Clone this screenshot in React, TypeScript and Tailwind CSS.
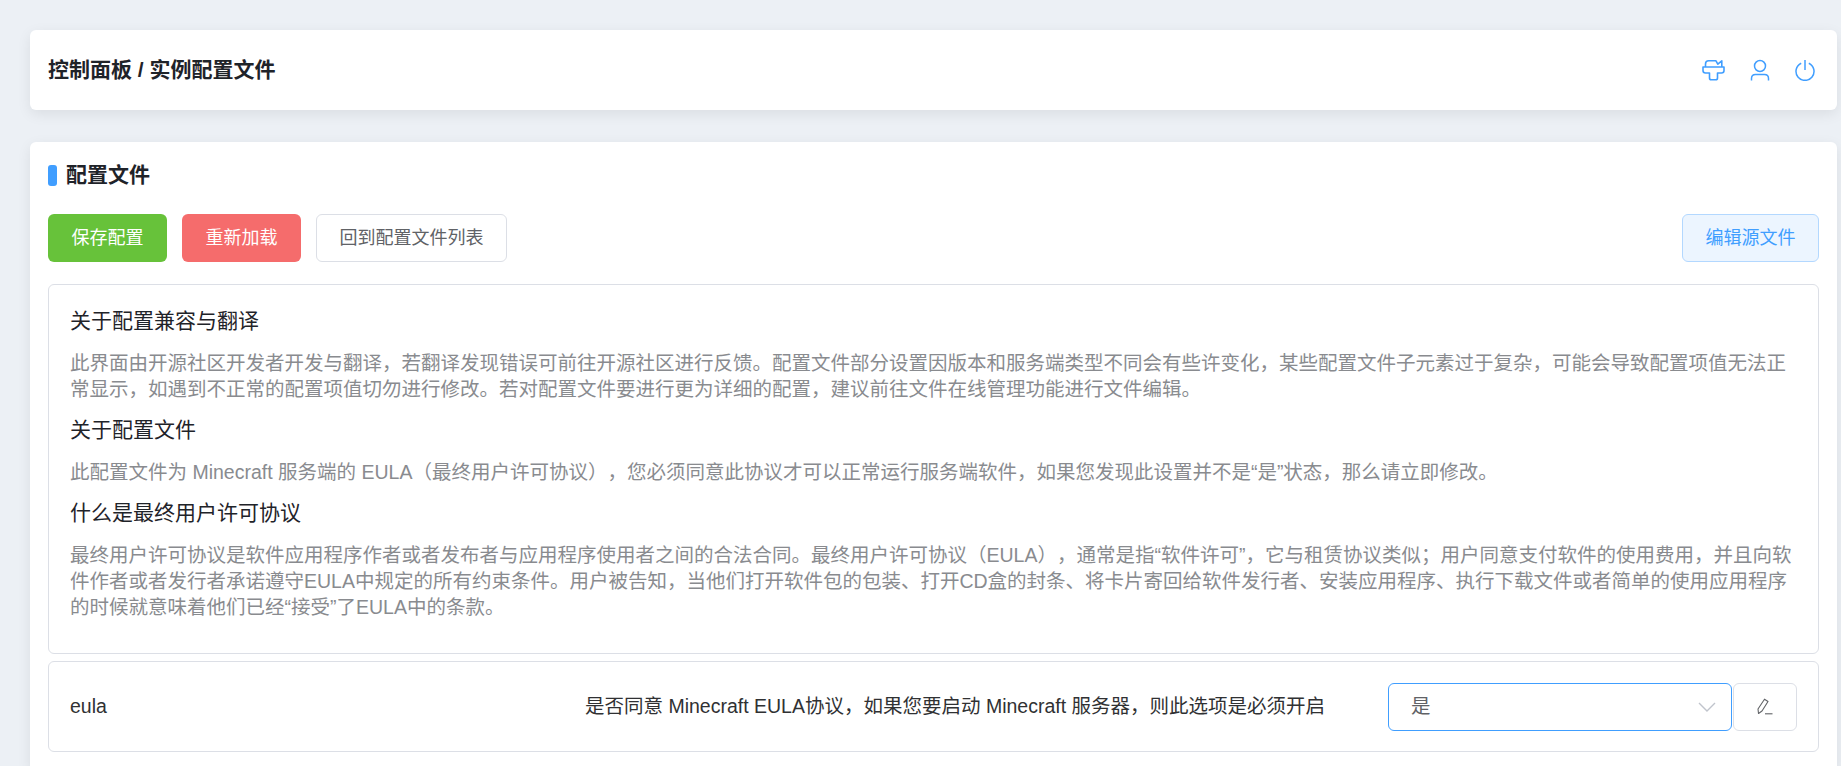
const font = { sans: "font-['Liberation_Sans','Noto_Sans_CJK_SC',sans-serif]" };

const notes = [
  {
    title: "关于配置兼容与翻译",
    body: "此界面由开源社区开发者开发与翻译，若翻译发现错误可前往开源社区进行反馈。配置文件部分设置因版本和服务端类型不同会有些许变化，某些配置文件子元素过于复杂，可能会导致配置项值无法正常显示，如遇到不正常的配置项值切勿进行修改。若对配置文件要进行更为详细的配置，建议前往文件在线管理功能进行文件编辑。",
  },
  {
    title: "关于配置文件",
    body: "此配置文件为 Minecraft 服务端的 EULA（最终用户许可协议），您必须同意此协议才可以正常运行服务端软件，如果您发现此设置并不是“是”状态，那么请立即修改。",
  },
  {
    title: "什么是最终用户许可协议",
    body: "最终用户许可协议是软件应用程序作者或者发布者与应用程序使用者之间的合法合同。最终用户许可协议（EULA），通常是指“软件许可”，它与租赁协议类似；用户同意支付软件的使用费用，并且向软件作者或者发行者承诺遵守EULA中规定的所有约束条件。用户被告知，当他们打开软件包的包装、打开CD盒的封条、将卡片寄回给软件发行者、安装应用程序、执行下载文件或者简单的使用应用程序的时候就意味着他们已经“接受”了EULA中的条款。",
  },
];

function BrushIcon() {
  return (
    <svg width="23" height="22" viewBox="0 0 23 22" fill="none" stroke="#409eff" strokeWidth="1.6" strokeLinejoin="round">
      <path d="M3.500 8V5q0-3.200 3.200-3.200h7.300l1.800 3.400 4-3.400V8" />
      <path d="M1 8h21v3.500q0 2.500-2.500 2.500H15.500v5q0 1.800-1.800 1.800H9.300q-1.800 0-1.800-1.800v-5H3.500Q1 14 1 11.500z" />
    </svg>
  );
}

function UserIcon() {
  return (
    <svg width="20" height="22" viewBox="0 0 20 22" fill="none" stroke="#409eff" strokeWidth="1.5">
      <circle cx="10" cy="7" r="5.500" />
      <path d="M1.500 21.500v-2q0-4 4-4h9q4 0 4 4v2" />
    </svg>
  );
}

function PowerIcon() {
  return (
    <svg width="20" height="22" viewBox="0 0 20 22" fill="none" stroke="#409eff" strokeWidth="1.5">
      <path d="M10 1v10" />
      <path d="M6.200 4.200a9 9 0 1 0 7.600 0" />
    </svg>
  );
}

function ArrowIcon() {
  return (
    <svg width="18" height="10" viewBox="0 0 18 10" fill="none" stroke="#c0c4cc" strokeWidth="1.4">
      <path d="M1 1l8 8 8-8" />
    </svg>
  );
}

function PenIcon() {
  return (
    <svg width="16" height="17" viewBox="0 0 16 17" fill="none" stroke="#606266" strokeWidth="1.1" strokeLinejoin="round">
      <path d="M1.500 15.500 1 11 7.500 1.200l3.500 2.300-6 9.500z" />
      <path d="M8 15.800h7.500" />
    </svg>
  );
}

export default function App() {
  return (
    <div className={`${font.sans} h-[766px] overflow-hidden bg-[#ecf0f5] pl-[30px] pr-[4px] pt-[30px] text-[#1f2329] [text-spacing-trim:space-all]`}>
      {/* top bar */}
      <div className="flex h-[80px] items-center justify-between rounded-md bg-white pl-[18px] pr-[22px] shadow-[0_4px_14px_rgba(0,0,0,0.08)]">
        <h1 className="text-[21px] font-bold">控制面板 / 实例配置文件</h1>
        <div className="flex items-center gap-[25px]">
          <BrushIcon />
          <UserIcon />
          <PowerIcon />
        </div>
      </div>

      {/* config card */}
      <div className="mt-[32px] rounded-md bg-white px-[18px] pb-[20px] pt-[21px] shadow-[0_4px_14px_rgba(0,0,0,0.08)]">
        <div className="flex h-[24px] items-center gap-[9px]">
          <span className="h-[21px] w-[9px] rounded-[3px] bg-[#409eff]" />
          <h2 className="text-[21px] font-bold">配置文件</h2>
        </div>

        <div className="mt-[27px] flex items-center">
          <button className="h-[48px] w-[119px] rounded-md bg-[#67c23a] text-[18px] text-white">保存配置</button>
          <button className="ml-[15px] h-[48px] w-[119px] rounded-md bg-[#f56c6c] text-[18px] text-white">重新加载</button>
          <button className="ml-[15px] h-[48px] w-[191px] rounded-md border border-[#dcdfe6] bg-white text-[18px] text-[#606266]">回到配置文件列表</button>
          <button className="ml-auto h-[48px] w-[137px] rounded-md border border-[#b3d8ff] bg-[#ecf5ff] text-[18px] text-[#409eff]">编辑源文件</button>
        </div>

        <div className="mt-[22px] h-[370px] rounded-md border border-[#dcdfe6] px-[21px] pt-[21px]">
          {notes.map((note) => (
            <div key={note.title}>
              <p className="mb-[14.5px] text-[21px] leading-[29px] text-[#1f2329]">{note.title}</p>
              <p className="mb-[13.5px] text-[19.5px] leading-[26px] text-[#898b8f]">{note.body}</p>
            </div>
          ))}
        </div>

        <div className="mt-[7px] flex h-[91px] items-center rounded-md border border-[#dcdfe6] pl-[21px] pr-[21px]">
          <span className="text-[19.5px] text-[#303133]">eula</span>
          <span className="ml-auto text-[19.5px] text-[#303133]">是否同意 Minecraft EULA协议，如果您要启动 Minecraft 服务器，则此选项是必须开启</span>
          <div className="ml-[63px] flex h-[48px] w-[344px] items-center justify-between rounded-md border border-[#409eff] pl-[22px] pr-[15px] text-[19.5px] text-[#606266]">
            <span>是</span>
            <ArrowIcon />
          </div>
          <button className="ml-px flex h-[48px] w-[64px] items-center justify-center rounded-md border border-[#dcdfe6] bg-white">
            <PenIcon />
          </button>
        </div>
      </div>
    </div>
  );
}
